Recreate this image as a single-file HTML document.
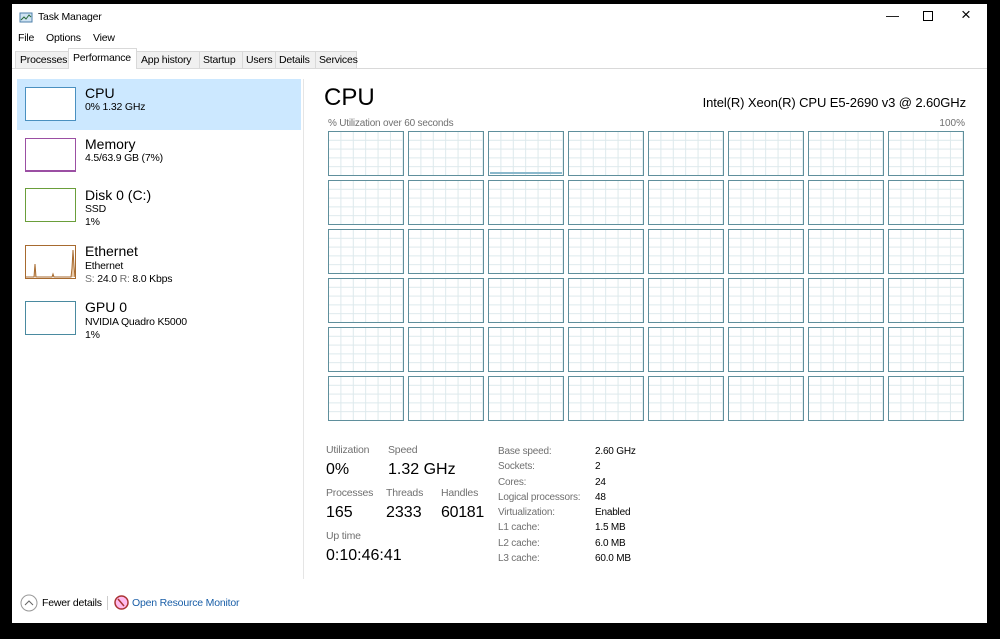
<!DOCTYPE html>
<html><head><meta charset="utf-8"><style>
*{margin:0;padding:0;box-sizing:border-box}
body{width:1000px;height:639px;background:#000;position:relative;overflow:hidden;font-family:"Liberation Sans",sans-serif;color:#000}
.win{position:absolute;left:12px;top:4px;width:975px;height:619px;background:#fff}
.a{position:absolute;white-space:nowrap}
.s11{font-size:10.5px;letter-spacing:-0.2px}
.g{color:#707070}
.grid{position:absolute;left:328px;top:131px;display:grid;grid-template-columns:repeat(8,76px);grid-template-rows:repeat(6,45px);column-gap:4px;row-gap:4px}
.grid div{border:1px solid #5f8f9c;background-color:#fff;background-image:linear-gradient(90deg,#dde9ec 1px,transparent 1px),linear-gradient(#dde9ec 1px,transparent 1px);background-size:12.4px 100%,100% 8.8px;background-position:-1px 0,0 -1px}
.thumb{position:absolute;left:25px;width:51px;height:34px;border:1px solid}
.n{font-size:16px}
</style></head><body>
<div class="win">
<svg class="a" style="left:7px;top:8px" width="14" height="12"><rect x="1" y="1" width="12" height="9" fill="#cfe3f3" stroke="#4d7fa8"/><polyline points="2,8 5,5 7,7 10,3 12,5" fill="none" stroke="#2a6a3a"/></svg>
<div class="a s11" style="left:26px;top:7px">Task Manager</div>
<div class="a" style="left:874px;top:4px;font-size:13px">&#8212;</div>
<div class="a" style="left:911px;top:7px;width:10px;height:10px;border:1px solid #000"></div>
<div class="a" style="left:949px;top:1px;font-size:17px;font-weight:300">&#215;</div>
<div class="a s11" style="left:6px;top:28px">File</div>
<div class="a s11" style="left:34px;top:28px">Options</div>
<div class="a s11" style="left:81px;top:28px">View</div>
<div class="a" style="left:0;top:64px;width:975px;height:1px;background:#d9d9d9"></div>
<div class="a" style="left:3px;top:47px;width:342px;height:17px;background:#f0f0f0;border:1px solid #d9d9d9;border-bottom:none"></div>
<div class="a" style="left:56px;top:44px;width:69px;height:21px;background:#fff;border:1px solid #d9d9d9;border-bottom:none"></div>
<div class="a s11" style="left:8px;top:50px">Processes</div>
<div class="a s11" style="left:61px;top:48px">Performance</div>
<div class="a s11" style="left:129px;top:50px">App history</div>
<div class="a" style="left:187px;top:47px;width:1px;height:17px;background:#d9d9d9"></div>
<div class="a s11" style="left:191px;top:50px">Startup</div>
<div class="a" style="left:230px;top:47px;width:1px;height:17px;background:#d9d9d9"></div>
<div class="a s11" style="left:234px;top:50px">Users</div>
<div class="a" style="left:263px;top:47px;width:1px;height:17px;background:#d9d9d9"></div>
<div class="a s11" style="left:267px;top:50px">Details</div>
<div class="a" style="left:303px;top:47px;width:1px;height:17px;background:#d9d9d9"></div>
<div class="a s11" style="left:307px;top:50px">Services</div>
<div class="a" style="left:5px;top:75px;width:284px;height:51px;background:#cce8ff"></div>
<div class="a" style="left:291px;top:75px;width:1px;height:500px;background:#e5e5e5"></div>
<div class="thumb" style="left:13px;top:83px;border-color:#4a90c0;background:#fff"></div>
<div class="a" style="left:73px;top:81px;font-size:14px">CPU</div>
<div class="a s11" style="left:73px;top:97px">0% 1.32 GHz</div>
<div class="thumb" style="left:13px;top:134px;border-color:#9b4fa3;border-bottom-width:2px"></div>
<div class="a" style="left:73px;top:132px;font-size:14px">Memory</div>
<div class="a s11" style="left:73px;top:148px">4.5/63.9 GB (7%)</div>
<div class="thumb" style="left:13px;top:184px;border-color:#6a9e3a"></div>
<div class="a" style="left:73px;top:183px;font-size:14px">Disk 0 (C:)</div>
<div class="a s11" style="left:73px;top:199px">SSD</div>
<div class="a s11" style="left:73px;top:212px">1%</div>
<div class="thumb" style="left:13px;top:241px;border-color:#a76a2f"><svg width="49" height="32" style="position:absolute;left:0;top:0"><polyline points="0,31 8,31 9,18 10,31 26,31 27,28 28,31 45,31 46,22 47,4 48,20 49,31" fill="#e8c9a8" stroke="#a76a2f" stroke-width="1"/></svg></div>
<div class="a" style="left:73px;top:239px;font-size:14px">Ethernet</div>
<div class="a s11" style="left:73px;top:256px">Ethernet</div>
<div class="a s11" style="left:73px;top:269px"><span class="g">S:</span> 24.0 <span class="g">R:</span> 8.0 Kbps</div>
<div class="thumb" style="left:13px;top:297px;border-color:#4a8aa0"></div>
<div class="a" style="left:73px;top:295px;font-size:14px">GPU 0</div>
<div class="a s11" style="left:73px;top:312px">NVIDIA Quadro K5000</div>
<div class="a s11" style="left:73px;top:325px">1%</div>
<div class="a" style="left:312px;top:80px;font-size:24px">CPU</div>
<div class="a" style="right:21px;top:91px;font-size:13px;letter-spacing:-0.1px">Intel(R) Xeon(R) CPU E5-2690 v3 @ 2.60GHz</div>
<div class="a g" style="left:316px;top:114px;font-size:10px;letter-spacing:-0.2px">% Utilization over 60 seconds</div>
<div class="a g" style="right:22px;top:114px;font-size:10px">100%</div>
</div>
<div class="grid">
<div></div><div></div><div></div><div></div><div></div><div></div><div></div><div></div>
<div></div><div></div><div></div><div></div><div></div><div></div><div></div><div></div>
<div></div><div></div><div></div><div></div><div></div><div></div><div></div><div></div>
<div></div><div></div><div></div><div></div><div></div><div></div><div></div><div></div>
<div></div><div></div><div></div><div></div><div></div><div></div><div></div><div></div>
<div></div><div></div><div></div><div></div><div></div><div></div><div></div><div></div>
</div>
<div class="a" style="left:490px;top:172px;width:72px;height:2px;background:#8ab8cc"></div>
<div class="win" style="background:none;pointer-events:none">
<div class="a g s11" style="left:314px;top:440px">Utilization</div>
<div class="a g s11" style="left:376px;top:440px">Speed</div>
<div class="a n" style="left:314px;top:457px">0%</div>
<div class="a n" style="left:376px;top:457px">1.32 GHz</div>
<div class="a g s11" style="left:314px;top:483px">Processes</div>
<div class="a g s11" style="left:374px;top:483px">Threads</div>
<div class="a g s11" style="left:429px;top:483px">Handles</div>
<div class="a n" style="left:314px;top:500px">165</div>
<div class="a n" style="left:374px;top:500px">2333</div>
<div class="a n" style="left:429px;top:500px;letter-spacing:-0.3px">60181</div>
<div class="a g s11" style="left:314px;top:526px">Up time</div>
<div class="a n" style="left:314px;top:543px">0:10:46:41</div>
<div class="a g" style="left:486px;top:440px;line-height:15.3px;font-size:10px;letter-spacing:-0.2px">Base speed:<br>Sockets:<br>Cores:<br>Logical processors:<br>Virtualization:<br>L1 cache:<br>L2 cache:<br>L3 cache:</div>
<div class="a" style="left:583px;top:440px;line-height:15.3px;font-size:10px;letter-spacing:-0.2px">2.60 GHz<br>2<br>24<br>48<br>Enabled<br>1.5 MB<br>6.0 MB<br>60.0 MB</div>
<svg class="a" style="left:8px;top:590px" width="18" height="18"><circle cx="9" cy="9" r="8" fill="none" stroke="#999"/><polyline points="5,11 9,7 13,11" fill="none" stroke="#666"/></svg>
<div class="a s11" style="left:30px;top:593px">Fewer details</div>
<div class="a" style="left:95px;top:592px;width:1px;height:14px;background:#ccc"></div>
<svg class="a" style="left:102px;top:591px" width="15" height="15"><circle cx="7.5" cy="7.5" r="6.5" fill="#fbe" stroke="#a33" stroke-width="1.5"/><line x1="4" y1="4" x2="10" y2="11" stroke="#a33" stroke-width="1.5"/></svg>
<div class="a s11" style="left:120px;top:593px;color:#1a5fa8">Open Resource Monitor</div>
</div>
</body></html>
